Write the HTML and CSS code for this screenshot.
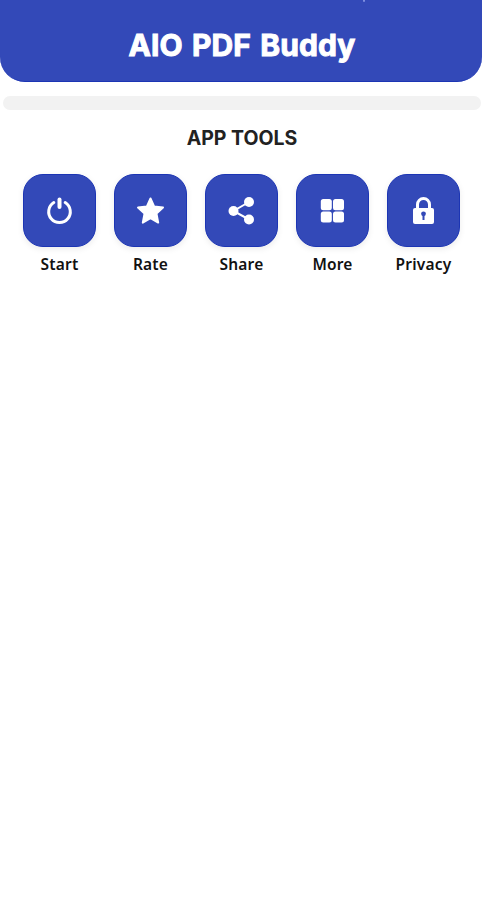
FILE: index.html
```html
<!DOCTYPE html>
<html lang="en">
<head>
    <meta charset="UTF-8">
    <meta name="viewport" content="width=device-width, initial-scale=1.0">
    <title>AIO PDF Buddy</title>
    <link rel="stylesheet" href="styles.css">
</head>
<body>
    <header class="header">
        <span class="header-mark"></span>
        <h1>AIO PDF Buddy</h1>
    </header>

    <div class="divider"></div>

    <main>
        <h2>APP TOOLS</h2>
        <nav class="tools">
            <a class="tool">
                <span class="tile">
                    <svg viewBox="0 0 73 73">
                        <path class="line" d="M30.8 28.6A10.8 10.8 0 1 0 42.2 28.6"/>
                        <path class="line stem" d="M36.5 25.5V33"/>
                    </svg>
                </span>
                <span class="label">Start</span>
            </a>
            <a class="tool">
                <span class="tile">
                    <svg viewBox="0 0 73 73">
                        <path class="joined" d="M36.5 24.5L40.2 32.6L49 33.6L42.5 39.6L44.2 48.6L36.5 44.2L28.8 48.6L30.5 39.6L24 33.6L32.8 32.6Z"/>
                    </svg>
                </span>
                <span class="label">Rate</span>
            </a>
            <a class="tool">
                <span class="tile">
                    <svg viewBox="0 0 73 73">
                        <path class="line thin" d="M44 28L28.5 37L44 45.5"/>
                        <circle cx="44" cy="28" r="5"/>
                        <circle cx="28.5" cy="37" r="5"/>
                        <circle cx="44" cy="45.5" r="5"/>
                    </svg>
                </span>
                <span class="label">Share</span>
            </a>
            <a class="tool">
                <span class="tile">
                    <svg viewBox="0 0 73 73">
                        <rect x="24.8" y="25" width="11" height="11.2" rx="2.5"/>
                        <rect x="37" y="25" width="11" height="11.2" rx="2.5"/>
                        <rect x="24.8" y="37.4" width="11" height="11.2" rx="2.5"/>
                        <rect x="37" y="37.4" width="11" height="11.2" rx="2.5"/>
                    </svg>
                </span>
                <span class="label">More</span>
            </a>
            <a class="tool">
                <span class="tile">
                    <svg viewBox="0 0 73 73">
                        <path class="line" d="M30.5 36V30.5A6 6 0 0 1 42.5 30.5V36"/>
                        <rect x="26" y="34" width="21" height="16" rx="2"/>
                        <circle class="keyhole" cx="36.5" cy="39.8" r="2.4"/>
                        <rect class="keyhole" x="35.5" y="40" width="2" height="6"/>
                    </svg>
                </span>
                <span class="label">Privacy</span>
            </a>
        </nav>
    </main>
</body>
</html>
```
FILE: styles.css
```css
:root {
    --primary: #3349b8;
    --primary-edge: #1c35b4;
    --text-color: #222;
    --divider-color: #f2f2f2;
}

* {
    box-sizing: border-box;
}
body {
    margin: 0;
    min-height: 100vh;
    background: #fff;
    color: var(--text-color);
    font-family: Inter, sans-serif;
}
.header {
    position: relative;
    height: 82px;
    padding-top: 24px;
    background: var(--primary);
    border-bottom: 1px solid var(--primary-edge);
    border-radius: 0 0 25px 25px;
}
.header-mark {
    position: absolute;
    top: 0;
    left: 363px;
    width: 2px;
    height: 2px;
    border-radius: 0 0 1px 1px;
    background: #7e8ee0;
}
h1 {
    margin: 0;
    padding-left: 2px;
    color: #fff;
    font-size: 30px;
    font-weight: 700;
    line-height: 43px;
    letter-spacing: 0.1px;
    word-spacing: 2px;
    text-align: center;
    -webkit-text-stroke: 1px #fff;
}
.divider {
    height: 14px;
    margin: 14px 1px 0 3px;
    border-radius: 7px;
    background: var(--divider-color);
}
h2 {
    margin: 14px 0 0;
    padding-left: 2px;
    font-size: 19.5px;
    font-weight: 700;
    line-height: 28px;
    text-align: center;
}
.tools {
    display: flex;
    justify-content: center;
    gap: 18px;
    margin-top: 22px;
}
.tool {
    display: flex;
    flex-direction: column;
    align-items: center;
    width: 73px;
}
.tile {
    width: 73px;
    height: 73px;
    border: 1px solid var(--primary-edge);
    border-radius: 20px;
    background: var(--primary);
    box-shadow: 0 2px 6px rgba(0, 0, 0, 0.08);
}
.tile svg {
    display: block;
    width: 73px;
    height: 73px;
    margin: -1px;
    fill: #fff;
}
.tile .line {
    fill: none;
    stroke: #fff;
    stroke-width: 3;
    stroke-linecap: round;
}
.tile .stem {
    stroke-width: 4;
}
.tile .thin {
    stroke-width: 2;
}
.tile .joined {
    stroke: #fff;
    stroke-width: 2;
    stroke-linejoin: round;
}
.tile .keyhole {
    fill: var(--primary);
}
.label {
    margin-top: 6px;
    padding-left: 1px;
    font-family: 'Noto Sans', sans-serif;
    font-size: 15.5px;
    font-weight: 600;
    line-height: 22px;
    letter-spacing: 0.2px;
    color: #111;
}
```
